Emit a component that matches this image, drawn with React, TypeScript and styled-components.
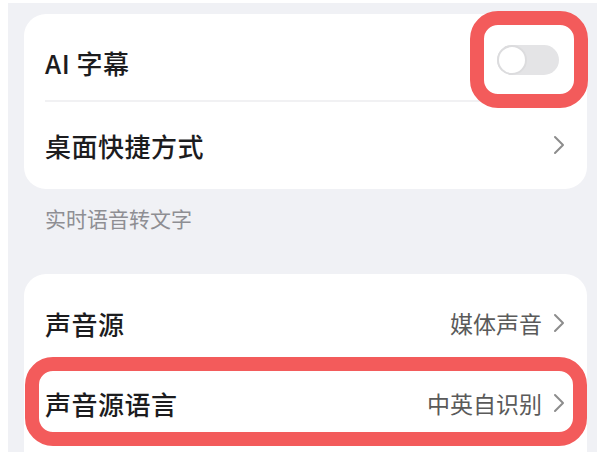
import styled, { createGlobalStyle } from "styled-components";

const GlobalStyle = createGlobalStyle`
    html, body {
        margin: 0;
        padding: 0;
        background: #ffffff;
    }
    body {
        font-family: "Noto Sans CJK SC", "Noto Sans", sans-serif;
    }
`;

const Chevron = () => (
    <svg width="12" height="20" viewBox="0 0 12 20" fill="none">
        <path d="M2 2 L10 10 L2 18" stroke="#8c8c8c" strokeWidth="2" strokeLinecap="round" strokeLinejoin="round" />
    </svg>
);

const App = () => {
    return (
        <>
            <GlobalStyle />
            <Page>
                <Card>
                    <Row height={76}>
                        <Label>AI 字幕</Label>
                        <Toggle>
                            <Thumb />
                        </Toggle>
                    </Row>
                    <Divider />
                    <Row height={86}>
                        <Label>桌面快捷方式</Label>
                        <Chevron />
                    </Row>
                </Card>
                <SectionTitle>实时语音转文字</SectionTitle>
                <Card $grow>
                    <Row height={80}>
                        <Label>声音源</Label>
                        <Value>
                            媒体声音
                            <Chevron />
                        </Value>
                    </Row>
                    <Row height={80}>
                        <Label>声音源语言</Label>
                        <Value>
                            中英自识别
                            <Chevron />
                        </Value>
                    </Row>
                </Card>
                <Highlight style={{ left: 462, top: 8, width: 118, height: 97 }} />
                <Highlight style={{ left: 17, top: 354, width: 562, height: 89 }} />
            </Page>
        </>
    );
};

const Page = styled.div`
    position: relative;
    box-sizing: border-box;
    margin: 3px 3px 0 8px;
    width: 589px;
    height: 449px;
    overflow: hidden;
    background: #f0f1f5;
    padding: 11px 10px 0 16px;
    display: flex;
    flex-direction: column;
`;

const Card = styled.div<{ $grow?: boolean }>`
    background: #ffffff;
    border-radius: 22px;
    padding: ${(p) => (p.$grow ? "9px" : "10px")} 22px ${(p) => (p.$grow ? "40px" : "1px")} 21px;
    display: flex;
    flex-direction: column;
    flex-shrink: 0;
`;

const Row = styled.div<{ height: number }>`
    height: ${(p) => p.height}px;
    display: flex;
    align-items: center;
    justify-content: space-between;
`;

const Label = styled.span`
    font-size: 26px;
    font-weight: 500;
    color: #1c1c1e;
    letter-spacing: 0.5px;
`;

const Value = styled.span`
    display: flex;
    align-items: center;
    gap: 11px;
    font-size: 23px;
    color: #5a5a5a;
`;

const Divider = styled.div`
    height: 2px;
    background: #f1f1f3;
`;

const Toggle = styled.div`
    width: 62px;
    height: 30px;
    border-radius: 15px;
    background: #e4e4e6;
    margin: -4px 6px 0 0;
    display: flex;
    align-items: center;
`;

const Thumb = styled.div`
    box-sizing: border-box;
    width: 30px;
    height: 30px;
    border-radius: 50%;
    background: #ffffff;
    border: 2px solid #dcdcde;
`;

const SectionTitle = styled.div`
    font-size: 21px;
    color: #8e8e93;
    padding: 14px 0 0 21px;
    height: 85px;
    box-sizing: border-box;
    flex-shrink: 0;
`;

const Highlight = styled.div`
    position: absolute;
    box-sizing: border-box;
    border: 14px solid #f35b5b;
    border-radius: 28px;
`;

export default App;
